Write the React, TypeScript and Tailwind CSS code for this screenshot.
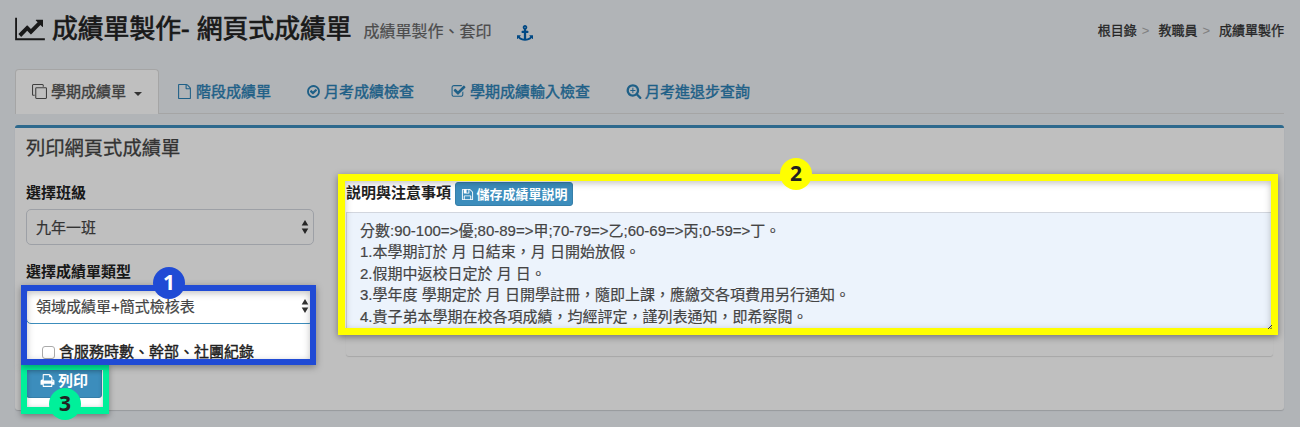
import type { ReactNode } from "react";

const icons = {
  chart: "M2048 1536v128H0V128h128v1408h1920zM1920 288v435q0 21-19.5 29.5T1865 745l-121-121-633 633q-10 10-23 10t-23-10L832 1024l-416 416-192-192 585-585q10-10 23-10t23 10l233 233 464-464-121-121q-16-16-7.5-35.5T1453 256h435q14 0 23 9t9 23z",
  clone: "M1664 1632V544q0-13-9.5-22.5T1632 512H544q-13 0-22.5 9.5T512 544v1088q0 13 9.5 22.5t22.5 9.5h1088q13 0 22.5-9.5t9.5-22.5zm128-1088v1088q0 66-47 113t-113 47H544q-66 0-113-47t-47-113V544q0-66 47-113t113-47h1088q66 0 113 47t47 113zm-384-384v160h-128V160q0-13-9.5-22.5T1248 128H160q-13 0-22.5 9.5T128 160v1088q0 13 9.5 22.5t22.5 9.5h160v128H160q-66 0-113-47T0 1248V160Q0 94 47 47T160 0h1088q66 0 113 47t47 113z",
  file: "M1596 380q28 28 48 76t20 88v1152q0 40-28 68t-68 28H224q-40 0-68-28t-28-68V96q0-40 28-68t68-28h896q40 0 88 20t76 48zm-444-244v376h376q-10-29-22-41l-313-313q-12-12-41-22zm384 1528V640h-416q-40 0-68-28t-28-68V128H256v1536h1280z",
  checkCircle: "M1299 813l-422 422q-19 19-45 19t-45-19l-294-294q-19-19-19-45t19-45l102-102q19-19 45-19t45 19l147 147 275-275q19-19 45-19t45 19l102 102q19 19 19 45t-19 45zm141 83q0-148-73-273t-198-198-273-73-273 73-198 198-73 273 73 273 198 198 273 73 273-73 198-198 73-273zm224 0q0 209-103 385.5T1281.5 1561 896 1664t-385.5-103T231 1281.5 128 896t103-385.5T510.5 231 896 128t385.5 103T1561 510.5 1664 896z",
  checkSquare: "M1472 930v318q0 119-84.5 203.5T1184 1536H352q-119 0-203.5-84.5T64 1248V416q0-119 84.5-203.5T352 128h832q63 0 117 25 15 7 18 23 3 17-9 29l-49 49q-10 10-23 10-3 0-9-2-23-6-45-6H352q-66 0-113 47t-47 113v832q0 66 47 113t113 47h832q66 0 113-47t47-113v-254q0-13 9-22l64-64q10-10 23-10 6 0 12 3 20 8 20 29zm231-489l-814 814q-24 24-57 24t-57-24l-430-430q-24-24-24-57t24-57l110-110q24-24 57-24t57 24l263 263 647-647q24-24 57-24t57 24l110 110q24 24 24 57t-24 57z",
  searchPlus: "M1056 776v112H824v232H712V888H480V776h232V544h112v232zM1216 832q0-185-131.5-316.5T768 384 451.5 515.5 320 832t131.5 316.5T768 1280t316.5-131.5T1216 832zm512 832q0 53-37.5 90.5T1600 1792q-54 0-90-38l-343-342q-179 124-399 124-143 0-273.5-55.5t-225-150-150-225T64 832t55.5-273.5 150-225 225-150T768 128t273.5 55.5 225 150 150 225T1472 832q0 220-124 399l343 343q37 37 37 90z",
  anchor: "M960 256q0-26-19-45t-45-19-45 19-19 45 19 45 45 19 45-19 19-45zm832 928v352q0 22-20 30-8 2-12 2-13 0-23-9l-93-93q-119 143-318.5 226.5T896 1776t-429.5-83.5T148 1466l-93 93q-9 9-23 9-4 0-12-2-20-8-20-30v-352q0-14 9-23t23-9h352q22 0 30 20 8 19-7 35l-100 100q67 91 189.5 153.5T768 1543V896H576q-26 0-45-19t-19-45V704q0-26 19-45t45-19h192V477q-58-34-93-92.5T640 256q0-106 75-181t181-75 181 75 75 181q0 70-35 128.5T1024 477v163h192q26 0 45 19t19 45v128q0 26-19 45t-45 19h-192v647q149-20 271.5-82.5T1485 1307l-100-100q-15-16-7-35 8-20 30-20h352q14 0 23 9t9 23z",
  floppy: "M512 1536h768v-384H512v384zm896 0h128V640q0-14-10-38.5t-20-34.5l-281-281q-10-10-34-20t-39-10v416q0 40-28 68t-68 28H480q-40 0-68-28t-28-68V256H256v1280h128v-416q0-40 28-68t68-28h832q40 0 68 28t28 68v416zM1024 608V288q0-13-9.5-22.5T992 256H800q-13 0-22.5 9.5T768 288v320q0 13 9.5 22.5t22.5 9.5h192q13 0 22.5-9.5t9.5-22.5zm640 32v928q0 40-28 68t-68 28H224q-40 0-68-28t-28-68V224q0-40 28-68t68-28h928q40 0 88 20t76 48l280 280q28 28 48 76t20 88z",
  print: "M448 1536h896v-256H448v256zm0-640h896V512h-160q-40 0-68-28t-28-68V256H448v640zm1152 64q0-26-19-45t-45-19-45 19-19 45 19 45 45 19 45-19 19-45zm128 0v416q0 13-9.5 22.5t-22.5 9.5h-224v160q0 40-28 68t-68 28H416q-40 0-68-28t-28-68v-160H96q-13 0-22.5-9.5T64 1376V960q0-79 56.5-135.5T256 768h64V224q0-40 28-68t68-28h672q40 0 88 20t76 48l152 152q28 28 48 76t20 88v256h64q79 0 135.5 56.5T1728 960z",
};

function Icon({ name, className, width = 1792 }: { name: keyof typeof icons; className: string; width?: number }) {
  return (
    <svg viewBox={`0 0 ${width} 1792`} fill="currentColor" className={`shrink-0 [-webkit-text-stroke:0] ${className}`} aria-hidden="true">
      <path d={icons[name]} />
    </svg>
  );
}

function Tab({ icon, iconClass, className, children }: { icon: keyof typeof icons; iconClass: string; className: string; children: ReactNode }) {
  return (
    <a className={`flex h-11 items-center text-[#2a80b4] [-webkit-text-stroke:0.4px] ${className}`}>
      <Icon name={icon} className={iconClass} />
      {children}
    </a>
  );
}

function SelectBox({ className, children }: { className: string; children: ReactNode }) {
  return (
    <div className={`flex h-9 w-72 items-center justify-between rounded-[5px] border bg-white pr-1 pl-[9px] text-[#444] ${className}`}>
      <span className="[-webkit-text-stroke:0.2px]">{children}</span>
      <svg viewBox="0 0 8 14" className="h-3.5 w-2" fill="#333" aria-hidden="true">
        <path d="M4 0l3.300 5.500H.7zM4 14L.7 8.500h6.600z" />
      </svg>
    </div>
  );
}

function Badge({ className, children }: { className: string; children: ReactNode }) {
  return (
    <div className={`absolute flex size-8 items-center justify-center rounded-full pb-px font-['Noto_Sans',sans-serif] text-[21px] leading-none font-bold ${className}`}>
      {children}
    </div>
  );
}

const notes = [
  "分數:90-100=>優;80-89=>甲;70-79=>乙;60-69=>丙;0-59=>丁。",
  "1.本學期訂於 月 日結束，月 日開始放假。",
  "2.假期中返校日定於 月 日。",
  "3.學年度 學期定於 月 日開學註冊，隨即上課，應繳交各項費用另行通知。",
  "4.貴子弟本學期在校各項成績，均經評定，謹列表通知，即希察閱。",
];

export default function App() {
  return (
    <div lang="zh-TW" className="relative h-[427px] w-[1300px] overflow-hidden bg-[#ecf0f5] pr-4 pl-[15px] font-['Liberation_Sans','Noto_Sans_CJK_TC',sans-serif] text-[15px] leading-[21px] whitespace-nowrap text-[#222]">
      <header className="flex h-[69px] justify-between">
        <div className="flex h-[58px] items-center">
          <Icon name="chart" width={2048} className="mr-[7px] h-[26px] w-[30px]" />
          <h1 className="text-[25.8px] leading-[58px] text-[#222] [-webkit-text-stroke:0.7px]">成績單製作- 網頁式成績單</h1>
          <span className="mt-[5px] ml-3 text-base text-[#666] [-webkit-text-stroke:0.2px]">成績單製作、套印</span>
          <Icon name="anchor" className="mt-2 ml-[25px] size-4 text-[#0060b0]" />
        </div>
        <nav className="flex h-[61px] items-center text-[13px] text-[#333]">
          <span className="[-webkit-text-stroke:0.3px]">根目錄</span>
          <span className="mr-[9px] ml-[5px] text-[#aaa]">&gt;</span>
          <span className="[-webkit-text-stroke:0.3px]">教職員</span>
          <span className="mr-[9px] ml-[5px] text-[#aaa]">&gt;</span>
          <span className="[-webkit-text-stroke:0.3px]">成績單製作</span>
        </nav>
      </header>

      <nav className="flex h-[45px] border-b border-[#ddd]">
        <a className="flex h-[45px] w-36 items-center rounded-t border border-b-0 border-[#ddd] bg-white pb-0.5 pl-4 text-[#555] [-webkit-text-stroke:0.4px]">
          <Icon name="clone" className="mr-1 size-[15px]" />
          學期成績單
          <span className="mt-1.5 ml-2 border-x-4 border-t-4 border-x-transparent border-t-[#444]" />
        </a>
        <Tab icon="file" iconClass="mr-1 size-[15px]" className="ml-[18px]">階段成績單</Tab>
        <Tab icon="checkCircle" iconClass="mr-[3px] size-[15px]" className="ml-[35px]">月考成績檢查</Tab>
        <Tab icon="checkSquare" iconClass="mr-1 size-[15px]" className="ml-[37px]">學期成績輸入檢查</Tab>
        <Tab icon="searchPlus" iconClass="mr-[3px] size-4" className="ml-9">月考進退步查詢</Tab>
      </nav>

      <main className="mt-[11px] h-[285px] rounded-[3px] border-t-[3px] border-[#3c8dbc] bg-white px-[11px] shadow-[0_1px_1px_rgba(0,0,0,0.15)]">
        <h2 className="h-[54px] pt-2.5 text-[19.3px] leading-[22px] text-[#444] [-webkit-text-stroke:0.3px]">列印網頁式成績單</h2>
        <div className="flex gap-8">
          <section className="w-72">
            <label className="block h-[27px] font-bold">選擇班級</label>
            <SelectBox className="border-[#d2d6de]">九年一班</SelectBox>
            <label className="mt-4 block h-[27px] font-bold">選擇成績單類型</label>
            <SelectBox className="border-[#3c8dbc]">領域成績單+簡式檢核表</SelectBox>
            <label className="mt-4 mb-px flex h-[22px] items-center pl-4 [-webkit-text-stroke:0.4px]">
              <span className="mt-0.5 mr-1 size-[13px] rounded-[3px] border border-[#aaa] bg-white" />
              含服務時數、幹部、社團紀錄
            </label>
            <button className="flex h-[35px] w-[76px] items-center justify-center rounded-[3px] border border-[#367fa9] bg-[#3c8dbc] font-bold text-white">
              <Icon name="print" className="mr-[3px] size-[15px]" />
              列印
            </button>
          </section>
          <section className="h-[174px] w-[927px] rounded-[3px] shadow-[0_1px_1px_rgba(0,0,0,0.13)]">
            <div className="flex h-[30px]">
              <span className="font-bold">説明與注意事項</span>
              <button className="ml-1 flex h-6 w-[118px] items-center justify-center rounded-[3px] border border-[#367fa9] bg-[#3c8dbc] text-[13px] font-bold text-white">
                <Icon name="floppy" className="mr-[3px] size-[13px]" />
                儲存成績單説明
              </button>
            </div>
            <div className="h-[117px] border border-[#d2d6de] bg-[#ecf3fc] pt-[7px] pl-[13px] leading-[21.4px] text-[#444] [-webkit-text-stroke:0.2px]">
              {notes.map((note) => (
                <p key={note}>{note}</p>
              ))}
            </div>
          </section>
        </div>
      </main>

      {/* Dimming layer with a cut-out for each highlighted area */}
      <div className="pointer-events-none absolute inset-0 bg-black/25 [clip-path:polygon(evenodd,0_0,1300px_0,1300px_427px,0_427px,0_0,340px_176px,1276px_176px,1276px_333px,340px_333px,340px_176px,0_0,23px_287px,314px_287px,314px_363px,23px_363px,23px_287px,0_0,23px_367px,107px_367px,107px_411px,23px_411px,23px_367px,0_0)]" />

      <div className="absolute top-[174px] left-[338px] h-[161px] w-[940px] border-[7px] border-[#ffff00] shadow-[0_2px_7px_rgba(0,0,0,0.4),inset_0_2px_7px_rgba(0,0,0,0.25)]" />
      <svg viewBox="0 0 4 4" className="absolute top-[325px] left-[1268px] size-1" stroke="#333" aria-hidden="true"><path d="M0 4L4 0M2.500 4L4 2.500" /></svg>
      <Badge className="top-[158px] left-[780px] bg-[#ffff00] text-[#222]">2</Badge>

      <div className="absolute top-[364px] left-[21px] h-[50px] w-[88px] border-[6px] border-b-[7px] border-[#00f09a] shadow-[0_2px_6px_rgba(0,0,0,0.35),inset_0_1px_5px_rgba(0,0,0,0.25)]" />
      <Badge className="top-[388px] left-[49px] bg-[#00f09a] text-[#222]">3</Badge>

      <div className="absolute top-[285px] left-[21px] h-20 w-[295px] border-[6px] border-[#204bd5] shadow-[0_2px_7px_rgba(0,0,0,0.35),inset_0_2px_7px_rgba(0,0,0,0.25)]" />
      <Badge className="top-[267px] left-[153px] bg-[#204bd5] text-white">1</Badge>
    </div>
  );
}
